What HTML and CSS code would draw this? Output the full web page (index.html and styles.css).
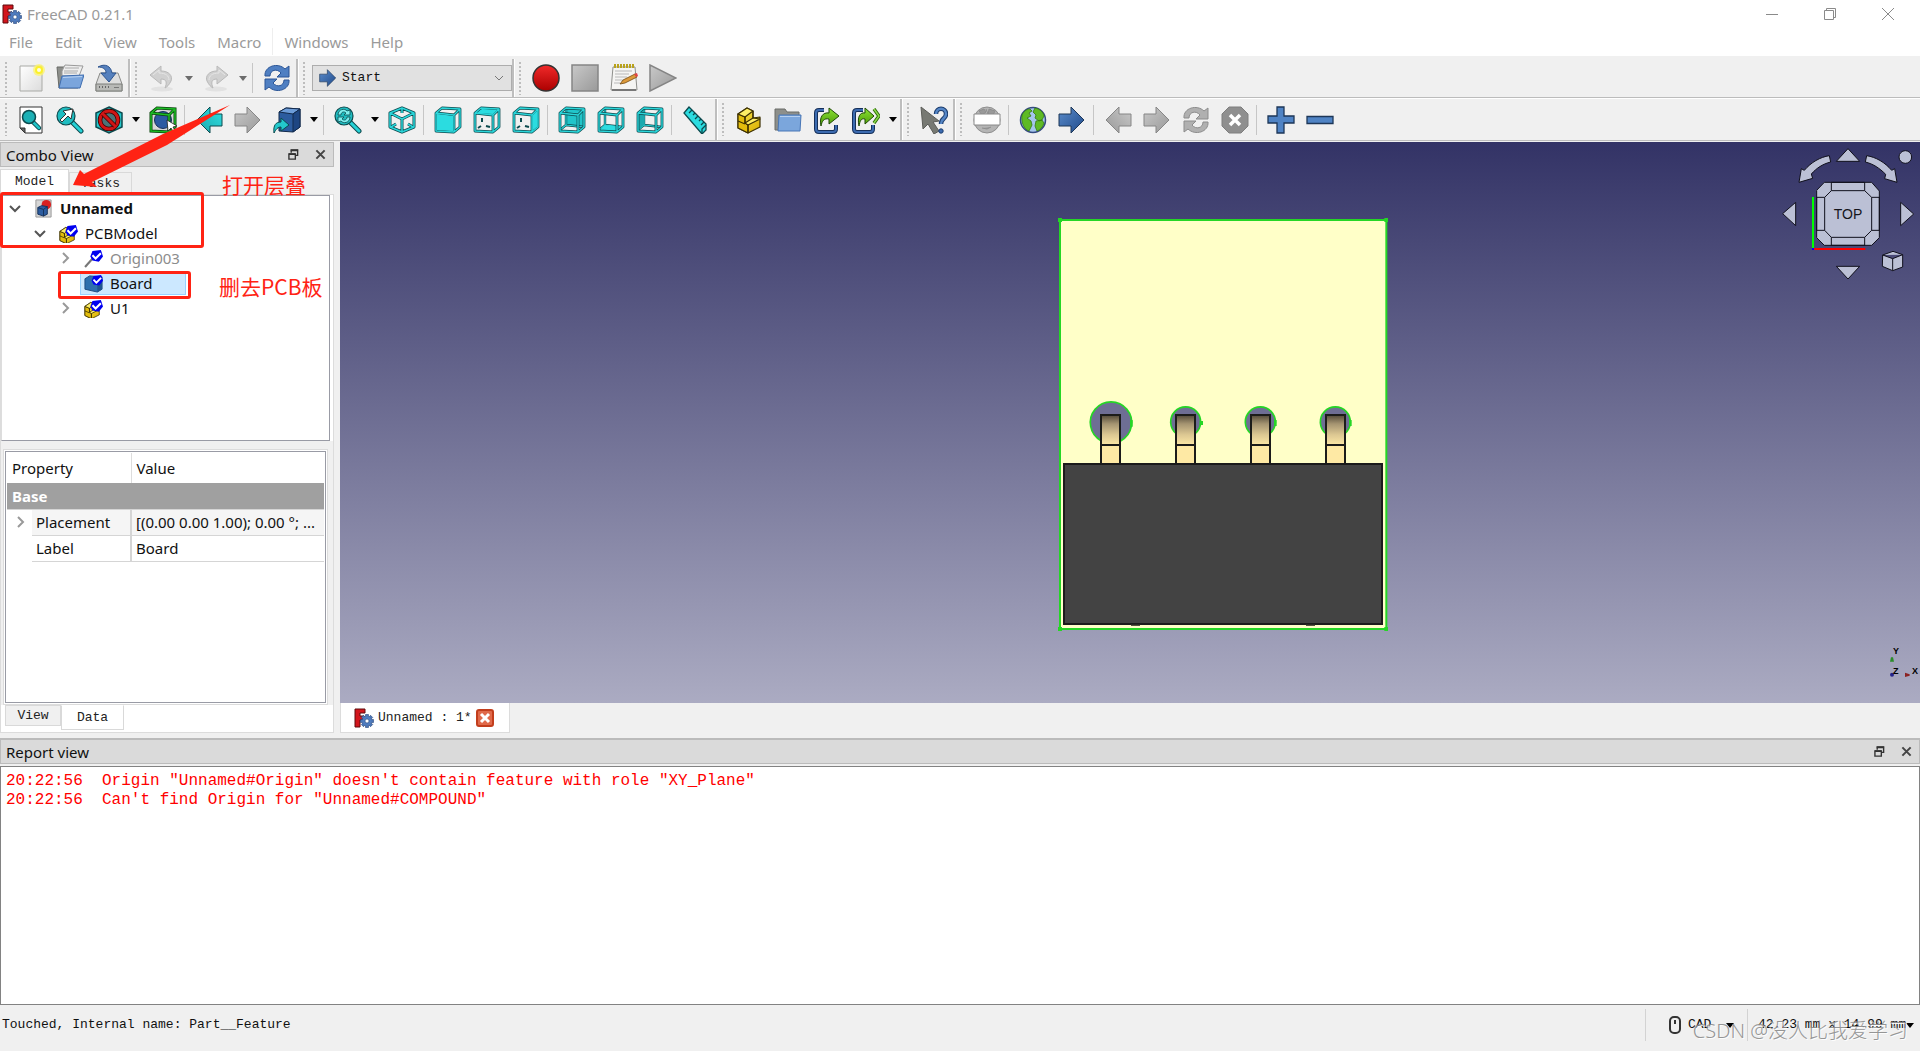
FILE: index.html
```html
<!DOCTYPE html>
<html lang="en">
<head>
<meta charset="utf-8">
<title>FreeCAD 0.21.1</title>
<link rel="stylesheet" href="styles.css">
</head>
<body>
<svg class="defs" aria-hidden="true">
  <defs>
    <linearGradient id="g-blue" x1="0" y1="0" x2="1" y2="1"><stop offset="0" stop-color="#5b8ccb"/><stop offset="1" stop-color="#1f4a8a"/></linearGradient>
    <linearGradient id="g-grey" x1="0" y1="0" x2="1" y2="1"><stop offset="0" stop-color="#c9c9c9"/><stop offset="1" stop-color="#999"/></linearGradient>
    <linearGradient id="g-red" x1="0" y1="0" x2="0" y2="1"><stop offset="0" stop-color="#f12a2a"/><stop offset="1" stop-color="#ab0000"/></linearGradient>
    <linearGradient id="g-cyan" x1="0" y1="0" x2="1" y2="1"><stop offset="0" stop-color="#34e0e2"/><stop offset="1" stop-color="#16a6ac"/></linearGradient>
    <linearGradient id="g-yellow" x1="0" y1="0" x2="1" y2="1"><stop offset="0" stop-color="#fce94f"/><stop offset="1" stop-color="#d9ae00"/></linearGradient>
    <linearGradient id="g-green" x1="0" y1="0" x2="0" y2="1"><stop offset="0" stop-color="#8ae234"/><stop offset="1" stop-color="#4e9a06"/></linearGradient>
    <linearGradient id="g-page" x1="0" y1="0" x2="1" y2="1"><stop offset="0" stop-color="#fff"/><stop offset="1" stop-color="#dcdcdc"/></linearGradient>
  </defs>
  <symbol id="logo" viewBox="0 0 20 20">
    <path d="M1 1h10v4H6v3h4v4H6v7H1z" fill="#d3151c" stroke="#5c0a0c"/>
    <g transform="translate(13 13)"><g fill="#4a74b4" stroke="#26477c" stroke-width=".6"><path d="M-1.5-6.500h3v13h-3z"/><path d="M-1.500-6.500h3v13h-3z" transform="rotate(45)"/><path d="M-1.500-6.500h3v13h-3z" transform="rotate(90)"/><path d="M-1.500-6.500h3v13h-3z" transform="rotate(135)"/></g><circle r="4.600" fill="#4f7cbf"/><circle r="2" fill="#fff" stroke="#26477c" stroke-width=".6"/></g>
  </symbol>
  <symbol id="new" viewBox="0 0 28 28"><path d="M3 2h22v25H3z" fill="url(#g-page)" stroke="#a9aaa6"/><circle cx="22" cy="6" r="6" fill="#fdf46c" opacity=".75"/><circle cx="22" cy="6" r="4" fill="#fbf02c"/><circle cx="22" cy="6" r="2" fill="#fffde0"/></symbol>
  <symbol id="open" viewBox="0 0 28 28"><path d="M1 3h7l2 2h12v19H3z" fill="#8d8f8b" stroke="#686a66"/><path d="M6 7l3-6 18 1-4 10H6z" fill="#eee" stroke="#999"/><path d="M9 4h14M8 7h14M8 9h13" stroke="#aaa"/><path d="M6 12l22-1-4 13H3z" fill="#7ba5dc" stroke="#3f6db0"/><path d="M7 13.500l19-1" stroke="#b9d2f2"/></symbol>
  <symbol id="save" viewBox="0 0 28 28"><path d="M5 9h18l4 11v7H1v-7z" fill="#dedede" stroke="#8a8b88"/><path d="M1 20h26v7H1z" fill="#b8b9b6" stroke="#7d7e7b"/><path d="M4 23h1m2 0h1m2 0h1m2 0h1" stroke="#666" stroke-width="2"/><path d="M19 23.500h5" stroke="#777"/><path d="M3 3C10-1 16 2 17 9h4l-7 9-8-9h5C11 5 8 3 3 3z" fill="#5580bd" stroke="#2d548f"/></symbol>
  <symbol id="undo" viewBox="0 0 28 28"><ellipse cx="14" cy="25" rx="11" ry="2.500" fill="#e2e2e2"/><path d="M2 11L13 2v5c8 0 12 5 10 10-2 4-4 6-6 7 2-5 2-9-4-9v5z" fill="#d0d0d0" stroke="#b9b9b9"/><path d="M5 11l6-5v3c7 0 10 3 10 7" fill="none" stroke="#e6e6e6"/></symbol>
  <symbol id="sync" viewBox="0 0 28 28"><path d="M2 12C1 2 15-2 22 5l4-3v11H14l4-4C14 4 7 6 7 12z"/><path d="M26 16c1 10-13 14-20 7l-4 3V15h12l-4 4c4 5 11 3 11-3z"/></symbol>
  <symbol id="arrow" viewBox="0 0 28 28"><path d="M1 8h12V1l13 13-13 13v-7H1z"/></symbol>
  <symbol id="record" viewBox="0 0 28 28"><circle cx="14" cy="14" r="13" fill="url(#g-red)" stroke="#333" stroke-width="1.500"/></symbol>
  <symbol id="stop" viewBox="0 0 28 28"><path d="M1 1h26v26H1z" fill="url(#g-grey)" stroke="#858585" stroke-width="1.500"/></symbol>
  <symbol id="play" viewBox="0 0 28 28"><path d="M1 1v26l26-13z" fill="url(#g-grey)" stroke="#858585" stroke-width="1.500"/></symbol>
  <symbol id="notes" viewBox="0 0 28 28"><path d="M3 3h22l2 23H1z" fill="#f5f5f3" stroke="#8f908c"/><path d="M2 26h24" stroke="#777" stroke-width="2"/><path d="M4 2h20" stroke="#b9a21c" stroke-width="4" stroke-dasharray="2 1"/><path d="M5 7h17M5 10h14M5 13h12M5 16h8M4 19h6" stroke="#b9b9b9"/><path d="M10 20l3-4 12-6 2 3-12 6z" fill="#dc9a3a" stroke="#74490f" stroke-width=".8"/><path d="M24 10l3-1 1 3-2 1z" fill="#e04444"/></symbol>
  <symbol id="fitall" viewBox="0 0 28 28"><path d="M3 1h22v26H8l-5-5z" fill="#fff" stroke="#333"/><path d="M3 22h5v5z" fill="#666" stroke="#333"/><path d="M15 15l7 7" stroke="#0c4a4e" stroke-width="4.500" stroke-linecap="round"/><path d="M15 15l7 7" stroke="#1fc4c8" stroke-width="2.500" stroke-linecap="round"/><circle cx="12" cy="11" r="6.500" fill="#1bb0b5" stroke="#0c4a4e" stroke-width="1.500"/></symbol>
  <symbol id="lens" viewBox="0 0 28 28"><path d="M16 16l9 9" stroke="#0c4a4e" stroke-width="5" stroke-linecap="round"/><path d="M16 16l9 9" stroke="#26d2d6" stroke-width="3" stroke-linecap="round"/><circle cx="10" cy="10" r="9" fill="#1fbcc0" stroke="#0c4a4e" stroke-width="1.200"/></symbol>
  <symbol id="fitsel" viewBox="0 0 28 28"><use href="#lens"/><path d="M4 14l6-6-3-3 10-2-2 10-3-3-6 6z" fill="#fff" stroke="#333"/></symbol>
  <symbol id="zoomsync" viewBox="0 0 28 28"><use href="#lens"/><path d="M4 9c0-6 7-7 9-4l3-1v5h-6l2-2c-2-2-5-1-5 2zM16 11c0 6-7 7-9 4l-3 1v-5h6l-2 2c2 2 5 1 5-2z" fill="#7ff0f0" stroke="#0c4a4e" stroke-width=".8"/></symbol>
  <symbol id="drawstyle" viewBox="0 0 28 28"><path d="M14 1l13 6v14l-13 6-13-6V7z" fill="#23c8cc" stroke="#0c4a4e" stroke-width="1.500"/><circle cx="14" cy="14" r="9" fill="#4b7377" stroke="#3a0000" stroke-width="4.500"/><circle cx="14" cy="14" r="9" fill="none" stroke="#d01515" stroke-width="3"/><path d="M8 8l12 12" stroke="#3a0000" stroke-width="4.500"/><path d="M7.500 7.500l13 13" stroke="#d01515" stroke-width="3"/></symbol>
  <symbol id="bbox" viewBox="0 0 28 28"><path d="M2 7l6-5 18 1v18l-6 5-18-1z" fill="#d8d8d8"/><circle cx="14" cy="14" r="8.500" fill="#2c5ba2" stroke="#16305a"/><g fill="none"><path d="M2 7l6-5 18 1v18l-6 5-18-1zM2 7l18 2v17M20 9l6-6" stroke="#07430a" stroke-width="3"/><path d="M2 7l6-5 18 1v18l-6 5-18-1zM2 7l18 2v17M20 9l6-6" stroke="#1cbb25" stroke-width="1.500"/></g><path d="M18 14l1 11 3-3 3 5 2-1-3-5 4-1z" fill="#fff" stroke="#222" stroke-width=".8"/></symbol>
  <symbol id="link" viewBox="0 0 28 28"><path d="M6 6l7-4 14 1v18l-7 5-14-1z" fill="#2c5c9f" stroke="#122a4c"/><path d="M6 6l7-4 14 1-7 5z" fill="#6c9cd8" stroke="#122a4c"/><path d="M20 8l7-5v18l-7 5z" fill="#1e4682" stroke="#122a4c"/><path d="M1 27c-1-8 2-11 7-11v-4l8 7-8 6v-4c-3 0-5 2-7 6z" fill="#23c8cc" stroke="#0c4a4e"/></symbol>
  <symbol id="iso" viewBox="0 0 28 28"><g fill="none" stroke-linejoin="round"><path d="M14 2l12 5v14l-12 5-12-5V7zM2 7l12 6 12-6M14 13v13M14 3v4M3 21l5-3M25 21l-5-3" stroke="#0c4a4e" stroke-width="3"/><path d="M14 2l12 5v14l-12 5-12-5V7zM2 7l12 6 12-6M14 13v13M14 3v4M3 21l5-3M25 21l-5-3" stroke="#2ad6da" stroke-width="1.500"/></g></symbol>
  <symbol id="frame" viewBox="0 0 28 28"><g fill="none" stroke-linejoin="round"><path d="M2 7l6-5 18 1v18l-6 5-18-1zM2 7l18 2v17M20 9l6-6" stroke="#0c4a4e" stroke-width="2.800"/><path d="M2 7l6-5 18 1v18l-6 5-18-1zM2 7l18 2v17M20 9l6-6" stroke="#2ad6da" stroke-width="1.400"/></g></symbol>
  <symbol id="hints" viewBox="0 0 28 28"><path d="M9 12v4M5 22l3-2M13 20l4 1" stroke="#0c4a4e" stroke-width="2"/></symbol>
  <symbol id="wire" viewBox="0 0 28 28"><path d="M8 3v16l-6 5M8 19l18 2" fill="none" stroke="#0c4a4e" stroke-width="2.400"/><path d="M8 3v16l-6 5M8 19l18 2" fill="none" stroke="#2ad6da" stroke-width="1.200"/></symbol>
  <symbol id="v-front" viewBox="0 0 28 28"><use href="#frame"/><path d="M3 8l16 2v15l-16-1z" fill="#2bdce0"/></symbol>
  <symbol id="v-top" viewBox="0 0 28 28"><use href="#hints"/><path d="M2 7l6-5 18 1-6 6z" fill="#2bdce0"/><use href="#frame"/><path d="M4 7l5-4 15 1-4 4z" fill="#2bdce0"/></symbol>
  <symbol id="v-right" viewBox="0 0 28 28"><use href="#hints"/><use href="#frame"/><path d="M20.500 9.500l5-5v16l-5 4z" fill="#2bdce0"/></symbol>
  <symbol id="v-rear" viewBox="0 0 28 28"><path d="M8 2l18 1v18l-18-2z" fill="#22c5ca"/><use href="#wire"/><use href="#frame"/></symbol>
  <symbol id="v-bottom" viewBox="0 0 28 28"><use href="#wire"/><path d="M8 19l18 2-6 5-18-1z" fill="#2bdce0"/><use href="#frame"/></symbol>
  <symbol id="v-left" viewBox="0 0 28 28"><use href="#wire"/><path d="M2 7l6-5v17l-6 6z" fill="#1ba9ae"/><use href="#frame"/></symbol>
  <symbol id="ruler" viewBox="0 0 28 28"><path d="M2 7l5-6 17 17v6l-4 4z" fill="#2bdce0" stroke="#0c4a4e" stroke-width="1.300"/><path d="M10 4l-3 3M13 7l-2 2M16 10l-3 3M19 13l-2 2M22 16l-3 3M20 28v-5l4-4" fill="none" stroke="#0c4a4e" stroke-width="1.300"/></symbol>
  <symbol id="part" viewBox="0 0 28 28"><g stroke="#3c3000" stroke-width="1.200" stroke-linejoin="round"><path d="M3 8l9-6 6 3v7l7-1v10l-12 6-10-5z" fill="url(#g-yellow)"/><path d="M3 8l7 3v6l3 2v8l-10-5z" fill="#e3bd0c"/><path d="M3 8l9-6 6 3-8 6zM10 17l8-5 7 1-12 6z" fill="#fdee66"/><path d="M3 15l7 3M10 11v6M18 5v7M13 19v8" fill="none"/></g></symbol>
  <symbol id="folder" viewBox="0 0 28 28"><path d="M1 3h10l2 3h12v18H1z" fill="#8d8f8b" stroke="#6b6d69"/><path d="M5 9h22l-1 16H4z" fill="#7ba6dc" stroke="#4876b6"/><path d="M6 10.500h20" stroke="#b5cff0"/></symbol>
  <symbol id="mklink" viewBox="0 0 28 28"><path d="M11 4H6Q3 4 3 7v16q0 3 3 3h14q3 0 3-3v-4" fill="none" stroke="#16305a" stroke-width="4"/><path d="M11 4H6Q3 4 3 7v16q0 3 3 3h14q3 0 3-3v-4" fill="none" stroke="#3c6bb0" stroke-width="2"/><path d="M8 20C6 11 10 6 16 7V2l10 8-10 8v-5c-5-1-7 2-8 7z" fill="url(#g-green)" stroke="#1f4a05"/></symbol>
  <symbol id="mklinks" viewBox="0 0 28 28"><path d="M11 4H5Q2 4 2 7v16q0 3 3 3h13q3 0 3-3v-4" fill="none" stroke="#16305a" stroke-width="4"/><path d="M11 4H5Q2 4 2 7v16q0 3 3 3h13q3 0 3-3v-4" fill="none" stroke="#3c6bb0" stroke-width="2"/><path d="M7 20C5 11 8 6 13 7V2l9 8-9 8v-5c-4-1-5 2-6 7z" fill="url(#g-green)" stroke="#1f4a05"/><path d="M22 3l5 7-5 7" fill="none" stroke="#2e6d07" stroke-width="3.500"/><path d="M22 3l5 7-5 7" fill="none" stroke="#8ad84a" stroke-width="1.500"/></symbol>
  <symbol id="whats" viewBox="0 0 28 28"><path d="M1 1l2 22 5-5 6 10 5-3-6-9 6-1z" fill="#777973" stroke="#5c5d59"/><path d="M16 8c0-7 10-7 10 0 0 5-5 4-5 10" fill="none" stroke="#1c3c6c" stroke-width="4.500"/><path d="M16 8c0-7 10-7 10 0 0 5-5 4-5 10" fill="none" stroke="#5586c6" stroke-width="2.500"/><circle cx="21" cy="25" r="2.200" fill="#3c6bb0" stroke="#1c3c6c"/></symbol>
  <symbol id="seturl" viewBox="0 0 28 28"><circle cx="14" cy="14" r="13" fill="#b5b5b5" stroke="#8e8e8e"/><path d="M6 5l5-2 2 3-4 3zM16 3l6 2-2 4h-5zM9 22l5 1 4-2M13 3l2 5" fill="#999" stroke="#8e8e8e"/><path d="M1 8h26v11H1z" fill="#fff" stroke="#8a8a8a"/></symbol>
  <symbol id="globe" viewBox="0 0 28 28"><circle cx="14" cy="14" r="12.500" fill="#a5c5ec" stroke="#334a80" stroke-width="1.500"/><path d="M3 9c2-4 5-6 8-6l2 2-3 2 2 3-4 2 4 3 1 4-3 6c-5-2-8-8-7-16zM16 2c5 1 8 4 9 8l-2 4-3 1-4-3 1-3-3-3zM17 15l6-1 2 3c-1 4-4 7-7 8l-2-5z" fill="#5eba25" stroke="#357a0e" stroke-width=".8"/></symbol>
  <symbol id="halt" viewBox="0 0 28 28"><path d="M8 1h12l7 7v12l-7 7H8l-7-7V8z" fill="#8f8f8f" stroke="#7e7e7e"/><path d="M9 9l10 10M19 9L9 19" stroke="#fff" stroke-width="3.500"/></symbol>
  <symbol id="plus" viewBox="0 0 28 28"><path d="M10 1h7v9h10v7H17v10h-7V17H1v-7h9z" fill="#4f83c4" stroke="#1d3657" stroke-width="1.300"/></symbol>
  <symbol id="minus" viewBox="0 0 28 28"><path d="M1 10.500h26v7H1z" fill="#4f83c4" stroke="#1d3657" stroke-width="1.300"/></symbol>
  <symbol id="float" viewBox="0 0 12 12"><path d="M3.500 4V1h7v6H8" fill="none" stroke="#333" stroke-width="1.500"/><path d="M1 5.500h7V11H1z" fill="none" stroke="#333" stroke-width="1.500"/><path d="M3 1.500h8M1 5.500h7" stroke="#333" stroke-width="2"/></symbol>
  <symbol id="cross" viewBox="0 0 12 12"><path d="M1.500 1.500l9 9M10.500 1.500l-9 9" stroke="#444" stroke-width="2.200"/></symbol>
  <symbol id="check" viewBox="0 0 18 18"><path d="M8 2l8-1 2 6-4 5-6-1-2-4z" fill="#0000f0"/><path d="M8 6l3 3 5-5" fill="none" stroke="#fff" stroke-width="2"/></symbol>
  <symbol id="t-doc" viewBox="0 0 18 20"><path d="M1 1h16v18H1z" fill="#d6d6d6" stroke="#999"/><circle cx="12" cy="6" r="5" fill="#d92020"/><path d="M3 9l4-2 6 1v8l-4 2-6-2z" fill="#2c5c9f" stroke="#14305a"/><path d="M3 9l6 2v7M9 11l4-3" fill="none" stroke="#14305a"/></symbol>
  <symbol id="t-part" viewBox="0 0 18 18"><g transform="translate(-1 2) scale(.62)"><use href="#part" width="28" height="28"/></g><use href="#check"/></symbol>
  <symbol id="t-origin" viewBox="0 0 18 18"><path d="M1 17l8-9" stroke="#777" stroke-width="2"/><path d="M9 3v6l6 2" stroke="#777" fill="none"/><use href="#check"/></symbol>
  <symbol id="t-board" viewBox="0 0 20 18"><path d="M1 4l5-3 13 1v13l-5 3-13-3z" fill="#2e6fae" stroke="#1c4a80"/><path d="M14 5v13l5-3V2z" fill="#1f5590"/><use href="#check" x="2" width="18" height="18" transform="translate(0 -1)"/></symbol>
</svg>

<header>
  <div class="titlebar">
    <svg class="logo"><use href="#logo"/></svg>
    <h1>FreeCAD 0.21.1</h1>
    <div class="winbuttons">
      <button aria-label="Minimize"><svg viewBox="0 0 12 12"><path d="M0 6.500h12" stroke="#8a8a8a"/></svg></button>
      <button aria-label="Restore"><svg viewBox="0 0 12 12"><path d="M.5 2.500h9v9h-9zM2.500 2.500v-2h9v9h-2" fill="none" stroke="#8a8a8a"/></svg></button>
      <button aria-label="Close"><svg viewBox="0 0 12 12"><path d="M0 0l12 12M12 0L0 12" stroke="#8a8a8a"/></svg></button>
    </div>
  </div>
  <nav class="menubar">
    <button>File</button><button>Edit</button><button>View</button><button>Tools</button><button>Macro</button><button class="divided">Windows</button><button>Help</button>
  </nav>
</header>

<div class="toolbar first">
  <div class="group"><i class="handle"></i>
    <button aria-label="New"><svg><use href="#new"/></svg></button>
    <button aria-label="Open"><svg><use href="#open"/></svg></button>
    <button aria-label="Save"><svg><use href="#save"/></svg></button>
  </div>
  <div class="group"><i class="handle"></i>
    <button aria-label="Undo"><svg><use href="#undo"/></svg></button>
    <button class="drop dim" aria-label="Undo list"></button>
    <button aria-label="Redo"><svg class="flip"><use href="#undo"/></svg></button>
    <button class="drop dim" aria-label="Redo list"></button>
    <i class="sep"></i>
    <button aria-label="Refresh"><svg fill="#4f7fc2" stroke="#2b5596"><use href="#sync"/></svg></button>
  </div>
  <div class="group"><i class="handle"></i>
    <div class="combo"><svg class="small" fill="url(#g-blue)" stroke="#1d3657"><use href="#arrow"/></svg>
      <select aria-label="Workbench"><option>Start</option></select>
      <svg class="chev" viewBox="0 0 10 6"><path d="M1 1l4 4 4-4" fill="none" stroke="#777"/></svg></div>
  </div>
  <div class="group last"><i class="handle"></i>
    <button aria-label="Record macro"><svg><use href="#record"/></svg></button>
    <button aria-label="Stop macro"><svg><use href="#stop"/></svg></button>
    <button aria-label="Macros"><svg><use href="#notes"/></svg></button>
    <button aria-label="Execute macro"><svg><use href="#play"/></svg></button>
  </div>
</div>
<div class="toolbar">
  <div class="group"><i class="handle"></i>
    <button aria-label="Fit all"><svg><use href="#fitall"/></svg></button>
    <button aria-label="Fit selection"><svg><use href="#fitsel"/></svg></button>
    <button aria-label="Draw style"><svg><use href="#drawstyle"/></svg></button>
    <button class="drop" aria-label="Draw styles"></button>
    <button aria-label="Bounding box"><svg><use href="#bbox"/></svg></button>
    <i class="sep"></i>
    <button aria-label="Selection back"><svg class="flip" fill="url(#g-cyan)" stroke="#0c4a4e"><use href="#arrow"/></svg></button>
    <button aria-label="Selection forward"><svg fill="url(#g-grey)" stroke="#868686"><use href="#arrow"/></svg></button>
    <button aria-label="Go to linked object"><svg><use href="#link"/></svg></button>
    <button class="drop" aria-label="Link actions"></button>
    <i class="sep"></i>
    <button aria-label="Sync view"><svg><use href="#zoomsync"/></svg></button>
    <button class="drop" aria-label="Sync options"></button>
    <button aria-label="Isometric"><svg><use href="#iso"/></svg></button>
    <i class="sep"></i>
    <button aria-label="Front"><svg><use href="#v-front"/></svg></button>
    <button aria-label="Top"><svg><use href="#v-top"/></svg></button>
    <button aria-label="Right"><svg><use href="#v-right"/></svg></button>
    <i class="sep"></i>
    <button aria-label="Rear"><svg><use href="#v-rear"/></svg></button>
    <button aria-label="Bottom"><svg><use href="#v-bottom"/></svg></button>
    <button aria-label="Left"><svg><use href="#v-left"/></svg></button>
    <i class="sep"></i>
    <button class="measure" aria-label="Measure"><svg><use href="#ruler"/></svg></button>
  </div>
  <div class="group"><i class="handle"></i>
    <button aria-label="Create part"><svg><use href="#part"/></svg></button>
    <button aria-label="Create group"><svg><use href="#folder"/></svg></button>
    <button aria-label="Make link"><svg><use href="#mklink"/></svg></button>
    <button aria-label="Make sub-link"><svg><use href="#mklinks"/></svg></button>
    <button class="drop" aria-label="Link types"></button>
  </div>
  <div class="group"><i class="handle"></i>
    <button aria-label="What's this?"><svg><use href="#whats"/></svg></button>
  </div>
  <div class="group last"><i class="handle"></i>
    <button aria-label="Set URL"><svg><use href="#seturl"/></svg></button>
    <i class="sep"></i>
    <button aria-label="Open website"><svg><use href="#globe"/></svg></button>
    <button aria-label="Start page"><svg fill="url(#g-blue)" stroke="#1d3657"><use href="#arrow"/></svg></button>
    <i class="sep"></i>
    <button aria-label="Previous page"><svg class="flip" fill="url(#g-grey)" stroke="#868686"><use href="#arrow"/></svg></button>
    <button aria-label="Next page"><svg fill="url(#g-grey)" stroke="#868686"><use href="#arrow"/></svg></button>
    <button aria-label="Reload"><svg fill="#b0b0b0" stroke="#8c8c8c"><use href="#sync"/></svg></button>
    <button aria-label="Stop loading"><svg><use href="#halt"/></svg></button>
    <i class="sep"></i>
    <button aria-label="Zoom in"><svg><use href="#plus"/></svg></button>
    <button aria-label="Zoom out"><svg><use href="#minus"/></svg></button>
  </div>
</div>

<main>
  <aside class="dock">
    <div class="docktitle"><h2>Combo View</h2>
      <button aria-label="Float"><svg><use href="#float"/></svg></button><button aria-label="Close panel"><svg><use href="#cross"/></svg></button></div>
    <div class="tabs top"><button class="on">Model</button><button>Tasks</button></div>
    <div class="pane">
      <ul class="tree">
        <li class="l0"><svg class="tw" viewBox="0 0 12 12"><path d="M1 4l5 5 5-5"/></svg><svg class="ti"><use href="#t-doc"/></svg><b>Unnamed</b></li>
        <li class="l1"><svg class="tw" viewBox="0 0 12 12"><path d="M1 4l5 5 5-5"/></svg><svg class="ti"><use href="#t-part"/></svg><span>PCBModel</span></li>
        <li class="l2"><svg class="tw shut" viewBox="0 0 12 12"><path d="M4 1l5 5-5 5"/></svg><svg class="ti"><use href="#t-origin"/></svg><span class="off">Origin003</span></li>
        <li class="l2"><i class="tw"></i><span class="sel"><svg class="ti"><use href="#t-board"/></svg><span>Board</span></span></li>
        <li class="l2"><svg class="tw shut" viewBox="0 0 12 12"><path d="M4 1l5 5-5 5"/></svg><svg class="ti"><use href="#t-part"/></svg><span>U1</span></li>
      </ul>
      <div class="propbox">
        <div class="props">
          <table>
            <colgroup><col class="c-ind"><col class="c-name"><col></colgroup>
            <thead><tr><th colspan="2">Property</th><th>Value</th></tr></thead>
            <tbody>
              <tr class="base"><td colspan="3">Base</td></tr>
              <tr class="alt"><td class="ind"><svg class="tw shut" viewBox="0 0 12 12"><path d="M4 1l5 5-5 5"/></svg></td><td>Placement</td><td>[(0.00 0.00 1.00); 0.00 °; ...</td></tr>
              <tr><td class="ind"></td><td>Label</td><td>Board</td></tr>
            </tbody>
          </table>
        </div>
      </div>
      <div class="tabs bottom"><button>View</button><button class="on">Data</button></div>
    </div>
  </aside>

  <section class="center">
    <div class="viewport">
      <svg class="model" viewBox="0 0 1110 1350">
        <defs><linearGradient id="pin" x1="0" y1="0" x2="0" y2="1"><stop offset="0" stop-color="#4e4636"/><stop offset=".3" stop-color="#a59471"/><stop offset=".65" stop-color="#dcc792"/><stop offset="1" stop-color="#fee9a6"/></linearGradient>
        <g id="leg"><path d="M3 2h57v92H3z" fill="url(#pin)"/><path d="M3 94h57v54H3z" fill="#fee9a4"/><path d="M3 150V3h57v147M3 93h57" fill="none" stroke="#1c1c1a" stroke-width="6"/></g></defs>
        <path d="M60 60h979v1227H60z" fill="#ffffc8" stroke="#25d625" stroke-width="6"/>
        <path d="M54 54h12v12H54zM1033 54h11v12h-11zM54 1281h12v12H54zM1033 1281h11v12h-11z" fill="#25d625"/>
        <g fill="#6e6e94" stroke="#25d625" stroke-width="5"><path d="M183 722a62 62 0 1 1 60 0z"/><path d="M408 700a45 45 0 1 1 58 0z"/><path d="M632 700a45 45 0 1 1 58 0z"/><path d="M857 700a45 45 0 1 1 58 0z"/></g>
        <path d="M270 660h8v20h-8zM479 663h10v12h-10zM702 660h8v18h-8zM927 660h8v18h-8z" fill="#25d625"/>
        <use href="#leg" x="180" y="642"/><use href="#leg" x="405" y="642"/><use href="#leg" x="630" y="642"/><use href="#leg" x="855" y="642"/>
        <path d="M72 792h954v480H72z" fill="#434343" stroke="#1b1b1b" stroke-width="6"/>
        <path d="M273 1276h27M798 1276h27" stroke="#55543f" stroke-width="4"/>
      </svg>
      <svg class="navcube" viewBox="0 36 480 444">
        <g fill="#bbc0d5" stroke="#10101c" stroke-width="3" stroke-linejoin="round">
          <path d="M229 94h70l-35-38zM229 409h70l-35 38zM107 217v70l-39-36zM422 217v70l39-35z"/>
          <path d="M208 77l4 19c-24 6-42 18-58 36l4 13-41 12 7-41 9 5c20-24 48-40 75-44z"/>
          <path d="M320 77l-4 19c24 6 42 18 61 37l-3 13 37 11-7-41-9 5c-20-24-48-40-75-44z"/>
          <circle cx="436" cy="81" r="19"/>
          <path d="M193 157h142l23 26v140l-23 23H193l-23-23V181z"/>
          <path d="M214 157h100v25H214zM214 322h100v24H214zM170 202h24v99h-24zM335 202h23v99h-23zM214 182l-20 20M314 182l21 20M194 301l20 21M335 301l-21 21" fill="none"/>
          <path d="M368 375l31-11 29 10v37l-30 11-31-13zM368 375l30 11 30-12M398 386v36"/>
        </g>
        <text x="264" y="266" text-anchor="middle" fill="#15151c">TOP</text>
        <path d="M159 201v156" stroke="#0f0" stroke-width="6"/><path d="M159 357h157" stroke="red" stroke-width="6"/><path d="M156 354h6v6h-6z" fill="#00f"/>
      </svg>
      <svg class="axis" viewBox="780 39 120 180">
        <path d="M810 95l3-13h6l3 13z" fill="#2a8c2a"/><path d="M855 128l14 5v4l-14 4z" fill="#8c2222"/><circle cx="816" cy="134" r="6" fill="#25258c"/>
        <text x="819" y="73">Y</text><text x="819" y="132">Z</text><text x="876" y="131">X</text>
      </svg>
    </div>
    <div class="doctabs"><button><svg class="logo"><use href="#logo"/></svg><span>Unnamed : 1*</span><svg class="x" viewBox="0 0 18 18"><rect x="1" y="1" width="16" height="16" rx="2" fill="#e0694a" stroke="#c23d1c" stroke-width="2"/><path d="M5 5l8 8M13 5l-8 8" stroke="#fff" stroke-width="3"/></svg></button></div>
  </section>
</main>

<section class="report">
  <div class="docktitle"><h2>Report view</h2>
    <button aria-label="Float report"><svg><use href="#float"/></svg></button><button aria-label="Close report"><svg><use href="#cross"/></svg></button></div>
  <pre class="log">20:22:56  Origin "Unnamed#Origin" doesn't contain feature with role "XY_Plane"
20:22:56  Can't find Origin for "Unnamed#COMPOUND"</pre>
</section>

<footer>
  <span class="msg">Touched, Internal name: Part__Feature</span>
  <button class="nav"><svg viewBox="0 0 12 18"><rect x="1" y="1" width="10" height="16" rx="4" fill="none" stroke="#333" stroke-width="2"/><path d="M6 4v4" stroke="#333" stroke-width="2"/></svg><span>CAD</span><i class="tri"></i></button>
  <button class="dims"><span>42.23 mm x 14.99 mm</span><i class="tri"></i></button>
  <span class="mark">CSDN @没人比我爱学习</span>
</footer>

<div class="notes">
  <i class="box a"></i><i class="box b"></i>
  <svg class="pointer" viewBox="70 100 165 90"><path d="M230 105L163 134 84 174 80 170 73 185 97 187 92 182 167 145z" fill="#ff2314"/></svg>
  <span class="n1">打开层叠</span><span class="n2">删去PCB板</span>
</div>
</body>
</html>
```
FILE: styles.css
```css
* { box-sizing: border-box; }
body {
  margin: 0; height: 100vh; min-height: 700px; position: relative;
  display: flex; flex-direction: column; overflow: hidden;
  background: #f0f0f0; color: #111;
  font: 15px/20px "Noto Sans", "Noto Sans CJK SC", sans-serif;
}
button { border: 0; background: none; padding: 0; margin: 0; font: inherit; color: inherit; }
h1, h2 { margin: 0; font-size: 15px; font-weight: 400; }
svg { display: block; flex: none; overflow: visible; }
.defs { position: absolute; width: 0; height: 0; }
.logo { width: 20px; height: 20px; }

header { background: #fff; color: #9a9a9a; height: 56px; flex: none; }
.titlebar { display: flex; align-items: center; height: 28px; padding-left: 2px; gap: 5px; }
.winbuttons { display: flex; margin-left: auto; padding-right: 3px; }
.winbuttons button { width: 58px; height: 28px; display: grid; place-items: center; }
.winbuttons svg { width: 12px; height: 12px; }
.menubar { display: flex; height: 28px; padding-bottom: 1px; }
.menubar button { padding: 0 11px; }
.menubar button:first-child { padding-left: 9px; }
.menubar .divided { border-left: 1px solid #eee; }

.toolbar { display: flex; height: 43px; flex: none; border-bottom: 1px solid #bcbcbc; border-top: 1px solid #fff; }
.toolbar.first { height: 42px; border-top: 0; padding-top: 3px; }
.group { display: flex; align-items: center; border-right: 2px solid #bebebe; }
.group + .group { box-shadow: inset 1px 0 #fff; }
.group.last { border-right: 0; }
.handle { width: 12px; height: 33px; flex: none; background: repeating-linear-gradient(#bdbdbd 0 2px, transparent 2px 4px) 5px 0 / 2px 100% no-repeat; }
.group:first-child .handle { width: 11px; }
.group button { width: 39px; height: 36px; display: grid; place-items: center; }
.group button svg { width: 28px; height: 28px; }
.flip { transform: scaleX(-1); }
.group .drop { width: 15px; }
.drop::before, .tri { content: ""; border: 4px solid transparent; border-top: 5px solid #000; border-bottom: 0; }
.drop.dim::before { border-top-color: #6c6c6c; }
.sep { width: 1px; height: 30px; margin: 0 4px 0 2px; background: #c6c6c6; }
.combo { display: flex; align-items: center; width: 200px; height: 26px; margin-left: 2px; padding: 0 7px 0 6px; gap: 5px; background: #e1e1e1; border: 1px solid #adadad; }
.combo .small { width: 18px; height: 18px; }
.combo select { flex: 1; appearance: none; border: 0; background: none; padding: 0; color: #111; }
.combo .chev { width: 10px; height: 6px; }
.combo select, .tabs, .doctabs, footer { font: 13px/18px "Liberation Mono", "Noto Sans CJK SC", monospace; }

main { flex: 1; display: flex; min-height: 0; gap: 6px; padding-top: 1px; }
.dock { width: 334px; flex: none; display: flex; flex-direction: column; }
.docktitle { display: flex; align-items: center; height: 25px; flex: none; padding: 0 7px 0 5px; gap: 16px; background: #dadada; border: 1px solid #bbb; }
.docktitle h2 { flex: 1; }
.docktitle svg { width: 11px; height: 11px; }
.tabs { display: flex; flex: none; }
.tabs button { background: #f0f0f0; border: 1px solid #d9d9d9; color: #222; }
.tabs .on { background: #fff; }
.top { height: 27px; padding-top: 2px; align-items: flex-end; }
.top button { width: 63px; height: 22px; border-bottom: 0; }
.top .on { width: 69px; height: 25px; }
.pane { flex: 1; display: flex; flex-direction: column; border: 1px solid #dcdcdc; background: #fff; min-height: 0; }
.tree { list-style: none; margin: 0 3px 0 0; padding: 0; flex: 1; border: 1px solid #999ba5; border-left-color: #ddd; background: #fff; }
.tree li { display: flex; align-items: center; height: 25px; gap: 13px; padding: 0 0 1px 7px; }
.tree .l1 { padding-left: 32px; }
.tree .l2 { padding-left: 57px; }
.tree .ti { width: 19px; height: 19px; margin-right: -6px; }
.tw { width: 12px; height: 12px; fill: none; stroke: #555; stroke-width: 2; }
.shut { stroke: #999; }
.off { color: #8c8c8c; }
.sel { display: flex; align-items: center; gap: 13px; width: 106px; height: 23px; margin-left: -4px; padding-left: 3px; background: #cce8ff; border: 1px solid #99d1ff; }
.propbox { height: 264px; padding: 8px 5px 0 2px; background: #f0f0f0; }
.props { height: 256px; padding: 3px; background: #fff; border: 1px solid #dcdcdc; outline: 1px solid #999ba5; outline-offset: -3px; }
table { width: 100%; border-collapse: collapse; table-layout: fixed; }
.c-ind { width: 25px; }
.c-name { width: 99px; }
th { height: 30px; text-align: left; font-weight: 400; padding: 0 5px; }
th + th { border-left: 1px solid #ddd; }
td { height: 26px; padding: 0 4px; white-space: nowrap; border-bottom: 1px solid #d5d5d5; }
td + td + td { border-left: 2px solid #d5d5d5; }
.base td { background: #a0a0a0; color: #fff; font-weight: 700; padding-left: 5px; }
td.ind { padding: 0 7px; border-bottom: 0; }
.alt td { background: #f5f5f5; }
.alt .ind { background: #fff; }
.bottom { height: 27px; padding-left: 4px; align-items: flex-start; }
.bottom button { width: 56px; height: 21px; }
.bottom .on { width: 63px; height: 25px; border-top-color: #fff; }

.center { flex: 1; display: flex; flex-direction: column; min-width: 0; }
.viewport { flex: 1; position: relative; overflow: hidden; background: linear-gradient(#333366, #ababc2); }
.model { position: absolute; left: 700px; top: 58px; width: 370px; height: 450px; }
.navcube { position: absolute; right: 0; top: 0; width: 160px; height: 148px; }
.navcube text { font: 42px "Liberation Sans", sans-serif; }
.axis { position: absolute; right: 0; bottom: 0; width: 40px; height: 60px; }
.axis text { font: bold 27px "Liberation Sans", sans-serif; }
.doctabs { height: 30px; flex: none; display: flex; }
.doctabs button { display: flex; align-items: center; width: 170px; padding-left: 13px; gap: 4px; background: #fff; border: 1px solid #dcdcdc; border-top: 0; color: #222; }
.doctabs .x { width: 18px; height: 18px; }

.report { height: 267px; flex: none; margin-top: 5px; display: flex; flex-direction: column; gap: 2px; }
.report .docktitle { height: 26px; border-top-width: 2px; }
.log { flex: 1; margin: 0; padding: 5px; background: #fff; border: 1px solid #828282; color: #f00; font: 16px/19px "Liberation Mono", monospace; }
footer { height: 46px; flex: none; display: flex; align-items: center; position: relative; padding: 0 8px 6px 2px; }
.msg { flex: 1; }
footer button { display: flex; align-items: center; height: 32px; border-left: 1px solid #d3d3d3; }
.nav { width: 102px; padding-left: 23px; gap: 7px; }
.nav svg { width: 12px; height: 18px; }
.nav .tri { margin-left: 8px; }
.dims { width: 165px; padding-left: 10px; white-space: nowrap; }
.mark { position: absolute; right: 12px; bottom: 6px; font: 300 20px/28px "Noto Sans", "Noto Sans CJK SC", sans-serif; color: #8c8c8c; opacity: 0.9; text-shadow: 1px 1px #fff; }

.notes { position: absolute; left: 0; top: 0; color: #ff2314; font: 400 21px/28px "Noto Sans CJK SC", sans-serif; pointer-events: none; }
.notes > * { position: absolute; white-space: nowrap; }
.box { border: 3px solid #ff2314; border-radius: 3px; }
.a { left: 0; top: 192px; width: 204px; height: 56px; }
.b { left: 58px; top: 271px; width: 133px; height: 28px; }
.pointer { left: 70px; top: 100px; width: 165px; height: 90px; }
.n1 { left: 222px; top: 170px; }
.n2 { left: 219px; top: 272px; }
```
